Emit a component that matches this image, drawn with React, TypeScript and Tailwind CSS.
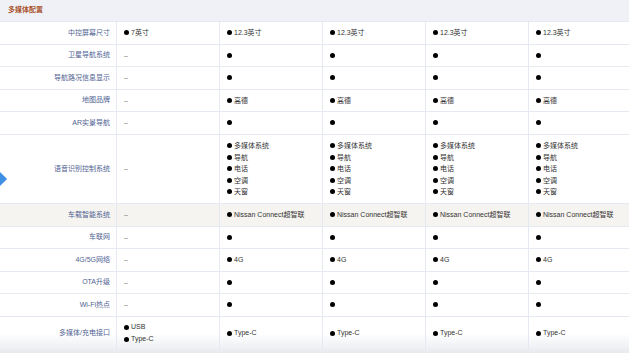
import React from "react";

type Cell = string[] | null;

type Row = {
  label: string;
  values: Cell[];
  h: string;
  highlight?: boolean;
  last?: boolean;
};

const dot = (t: string): Cell => [t];

const rows: Row[] = [
  { label: "中控屏幕尺寸", h: "h-[22.5px]", values: [dot("7英寸"), dot("12.3英寸"), dot("12.3英寸"), dot("12.3英寸"), dot("12.3英寸")] },
  { label: "卫星导航系统", h: "h-[22.5px]", values: [null, dot(""), dot(""), dot(""), dot("")] },
  { label: "导航路况信息显示", h: "h-[22.5px]", values: [null, dot(""), dot(""), dot(""), dot("")] },
  { label: "地图品牌", h: "h-[22.5px]", values: [null, dot("高德"), dot("高德"), dot("高德"), dot("高德")] },
  { label: "AR实景导航", h: "h-[22.5px]", values: [null, dot(""), dot(""), dot(""), dot("")] },
  {
    label: "语音识别控制系统",
    h: "h-[69.5px]",
    values: [
      null,
      ["多媒体系统", "导航", "电话", "空调", "天窗"],
      ["多媒体系统", "导航", "电话", "空调", "天窗"],
      ["多媒体系统", "导航", "电话", "空调", "天窗"],
      ["多媒体系统", "导航", "电话", "空调", "天窗"],
    ],
  },
  {
    label: "车载智能系统",
    h: "h-[22.5px]",
    highlight: true,
    values: [null, dot("Nissan Connect超智联"), dot("Nissan Connect超智联"), dot("Nissan Connect超智联"), dot("Nissan Connect超智联")],
  },
  { label: "车联网", h: "h-[22.5px]", values: [null, dot(""), dot(""), dot(""), dot("")] },
  { label: "4G/5G网络", h: "h-[22.5px]", values: [null, dot("4G"), dot("4G"), dot("4G"), dot("4G")] },
  { label: "OTA升级", h: "h-[22.5px]", values: [null, dot(""), dot(""), dot(""), dot("")] },
  { label: "Wi-Fi热点", h: "h-[22.5px]", values: [null, dot(""), dot(""), dot(""), dot("")] },
  {
    label: "多媒体/充电接口",
    h: "h-[34.5px]",
    last: true,
    values: [["USB", "Type-C"], dot("Type-C"), dot("Type-C"), dot("Type-C"), dot("Type-C")],
  },
];

function Bullet({ text }: { text: string }) {
  return (
    <div className="flex items-center">
      <span className="mr-[2px] inline-block h-[5px] w-[5px] rounded-full bg-black" />
      <span>{text}</span>
    </div>
  );
}

export default function App() {
  return (
    <div
      className="relative h-[353px] w-[629px] overflow-hidden bg-[#e9ebef] text-[7px]"
      style={{ fontFamily: '"Liberation Sans", "Noto Sans CJK SC", sans-serif' }}
    >
      <div className="flex h-[21px] items-center bg-[#eff1f7] pl-[8px] font-bold text-[#a9522a]">多媒体配置</div>

      {rows.map((row) => (
        <div
          key={row.label}
          className={`grid grid-cols-[116px_repeat(5,103px)] border-t border-[#e5e9f2] ${row.h} ${
            row.highlight ? "bg-[#f6f4f0]" : row.last ? "bg-gradient-to-b from-white from-50% to-[#eceef2]" : "bg-white"
          }`}
        >
          <div className="flex items-center justify-end pr-[6px] text-[#4f5f92]">{row.label}</div>
          {row.values.map((v, i) => (
            <div
              key={i}
              className={`flex flex-col justify-center border-l border-[#e5e9f2] pl-[7px] leading-[11.5px] text-[#333] ${
                row.last ? "leading-[12px]" : ""
              }`}
            >
              {v === null ? <span className="text-[#777]">–</span> : v.map((t, j) => <Bullet key={j} text={t} />)}
            </div>
          ))}
        </div>
      ))}

      <div className="absolute left-[-5px] top-[174px] h-[10px] w-[10px] rotate-45 bg-[#3f8fe4]" />
    </div>
  );
}
